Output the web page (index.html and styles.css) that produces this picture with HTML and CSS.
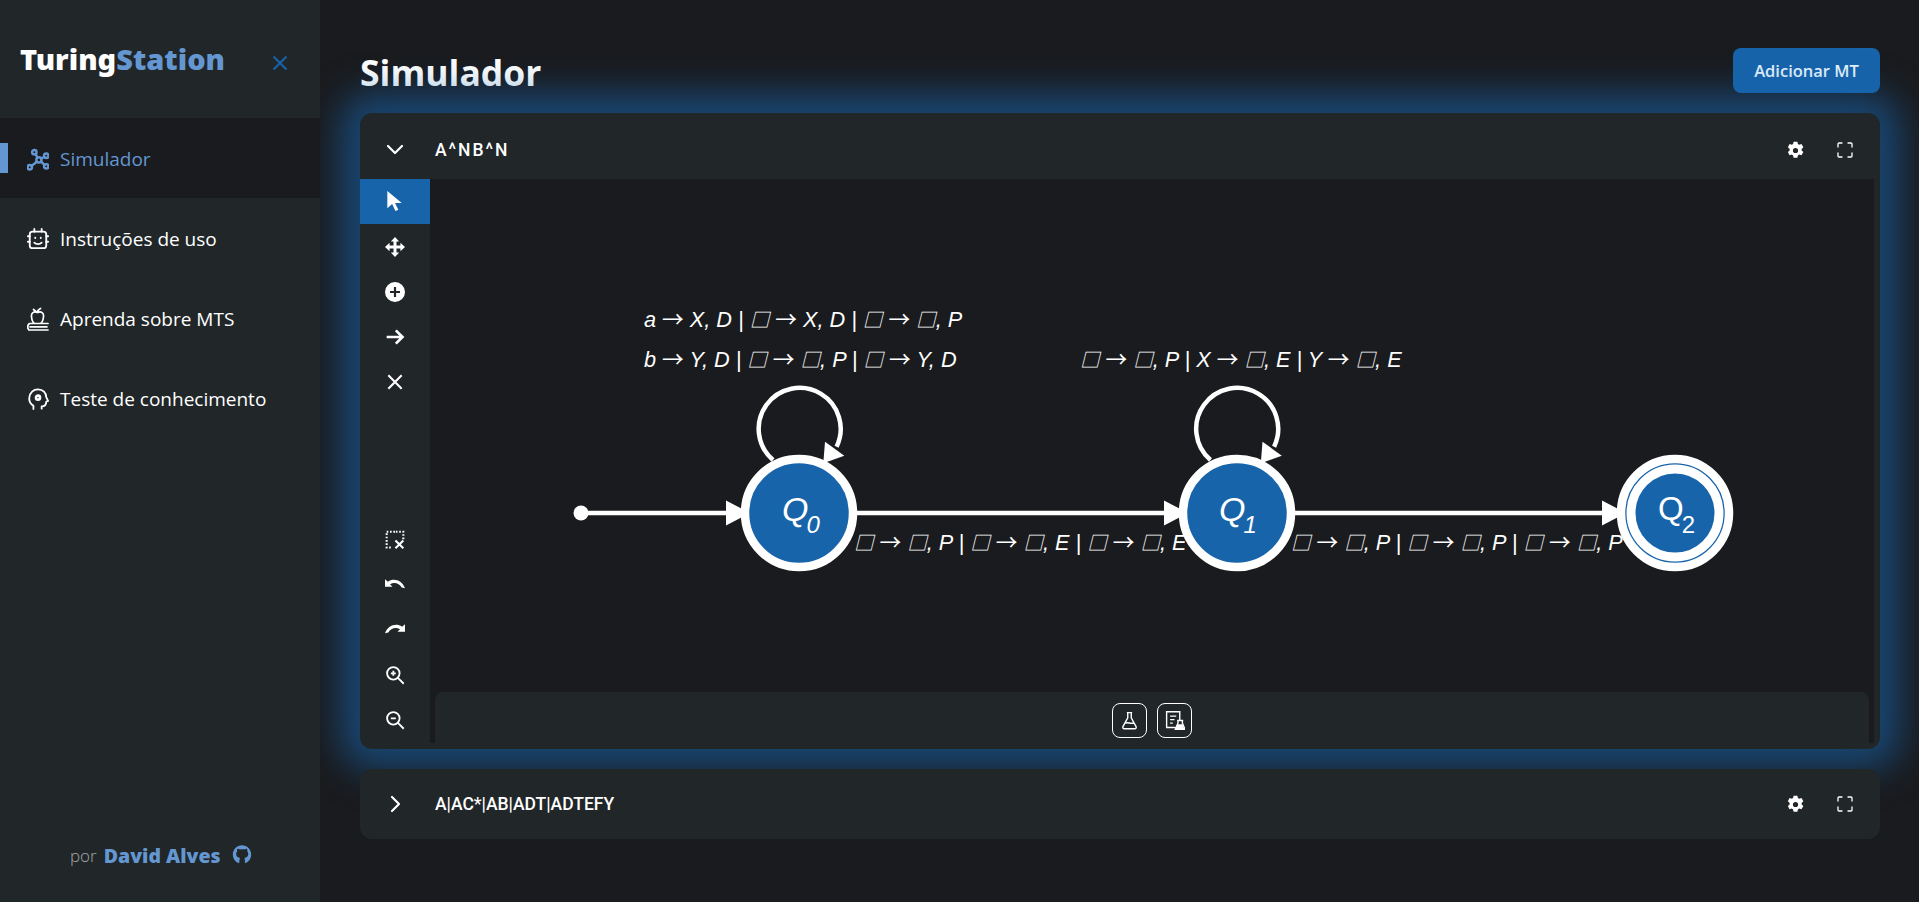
FILE: index.html
```html
<!DOCTYPE html>
<html lang="pt-BR">
<head>
  <meta charset="UTF-8">
  <meta name="viewport" content="width=device-width, initial-scale=1.0">
  <title>TuringStation</title>
  <link rel="stylesheet" href="styles.css">
</head>
<body>
  <aside class="sidebar">
    <div class="brand">
      <span class="logo">Turing<span class="logo-accent">Station</span></span>
      <svg class="brand-close" viewBox="0 0 16 16"><path d="M1.5 1.5l13 13M14.5 1.5l-13 13"/></svg>
    </div>

    <nav class="menu">
      <a class="menu-item active" href="#">
        <svg class="menu-icon chunky" viewBox="0 0 24 24"><circle cx="8" cy="4.500" r="2.400"/><circle cx="21" cy="8.500" r="2.400"/><circle cx="3" cy="21" r="2.400"/><circle cx="21" cy="20" r="2.400"/><circle cx="13" cy="13" r="2.800"/><path d="M9.500 7l2 3.500M18.800 9.800l-3.500 1.800M5 19.500l5.800-4.500M19 18.500l-3.800-3.800"/></svg>
        Simulador
      </a>
      <a class="menu-item" href="#">
        <svg class="menu-icon" viewBox="0 0 24 24"><rect x="3" y="4" width="18" height="18" rx="3"/><path d="M8 1v3M16 1v3M1 9h2M1 15h2M21 9h2M21 15h2M8 16c2 2.200 6 2.200 8 0M9 10.500v.5M15 10.500v.5"/></svg>
        Instruções de uso
      </a>
      <a class="menu-item" href="#">
        <svg class="menu-icon light" viewBox="0 0 22 24"><path d="M10 5.500c-3-1.500-6 .5-5.500 4 .2 3 1.500 6 3 7h6c1.500-1 2.800-4 3-7 .5-3.500-2.500-5.500-5.500-4zM10.500 5.500c0-1.500 1-3 3-4M6.500 2.500l3 2.500M2 23c-2-2-1.500-5 .5-6.500H21M2 23h19M3 19.800h17"/></svg>
        Aprenda sobre MTS
      </a>
      <a class="menu-item" href="#">
        <svg class="menu-icon" viewBox="0 0 24 24"><path d="M7 23v-3.500c-3-2-5-5-4.500-9C3 5 7 1.500 12 1.500c5.500 0 9 4 9 8.500l2 4-2 1c0 3-1 5-5 5v2.500"/><circle class="gear-dot" cx="12" cy="10.500" r="2.200"/></svg>
        Teste de conhecimento
      </a>
    </nav>

    <div class="credit">
      <span>por</span>
      <b class="credit-name">David Alves</b>
      <svg class="credit-icon" viewBox="0 0 24 24"><path d="M8.500 22.500c-4.500-1.500-7.500-5.500-7.500-10.500C1 6 6 1 12 1s11 5 11 11c0 5-3 9-7.500 10.500v-4c0-1-.3-1.800-.8-2.300 3-.5 4.800-2 4.800-5.200 0-1.200-.4-2.200-1.200-3 .2-.9.2-2-.3-3-1.200 0-2.200.6-3 1.100-1.900-.5-3.600-.5-5.400 0C8.800 5.600 7.800 5 6.500 5c-.5 1-.5 2.100-.3 3C5.400 8.800 5 9.800 5 11c0 3.200 1.800 4.700 4.800 5.200-.5.500-.8 1.300-.8 2.300z"/></svg>
    </div>
  </aside>

  <main class="content">
    <div class="page-head">
      <h1 class="page-title">Simulador</h1>
      <button class="add-btn">Adicionar MT</button>
    </div>

    <section class="card open">
      <div class="card-head">
        <svg class="chevron" viewBox="0 0 20 20"><path d="M3 6l7 7 7-7"/></svg>
        <span class="card-title spaced">A^NB^N</span>
        <svg class="head-icon" viewBox="0 0 512 512"><use href="#gear"/></svg>
        <svg class="head-icon frame" viewBox="0 0 16 16"><path d="M1 5V2a1 1 0 0 1 1-1h3M11 1h3a1 1 0 0 1 1 1v3M15 11v3a1 1 0 0 1-1 1h-3M5 15H2a1 1 0 0 1-1-1v-3"/></svg>
      </div>

      <div class="card-body">
        <div class="toolbar">
          <div class="tool-group">
            <button class="tool active"><svg class="cursor" viewBox="0 0 20 24"><path d="M2 1v18l5-4.500 3.500 7.500 3-1.500-3.500-7h7z"/></svg></button>
            <button class="tool"><svg viewBox="0 0 24 24"><path d="M12 0l5 5.500h-3.200v4.700h4.700V7l5.500 5-5.500 5v-3.200h-4.700v4.700H17L12 24l-5-5.500h3.200v-4.700H5.500V17L0 12l5.500-5v3.200h4.700V5.500H7z"/></svg></button>
            <button class="tool"><svg viewBox="1 1 22 22"><path fill-rule="evenodd" d="M12 1a11 11 0 1 0 0 22 11 11 0 0 0 0-22zM10.800 6.500h2.400v4.300h4.300v2.400h-4.300v4.300h-2.400v-4.300H6.500v-2.400h4.300z"/></svg></button>
            <button class="tool"><svg class="line-icon bold" viewBox="0 0 24 24"><path d="M2 12h19M13 4l8 8-8 8"/></svg></button>
            <button class="tool"><svg class="line-icon" viewBox="0 0 24 24"><path d="M4 4l16 16M20 4L4 20"/></svg></button>
          </div>
          <div class="tool-group">
            <button class="tool"><svg class="line-icon" viewBox="0 0 24 24"><path class="dots" d="M12 2H2v19h7M22 11V2H12"/><path d="M12.500 12.500l9.500 9.500M22 12.500L12.500 22"/></svg></button>
            <button class="tool"><svg viewBox="0 0 24 24"><path d="M0 5v9h9L6 11c5-3 11-1.500 14 4l4 1C21 7 11 2.500 3.500 8z"/></svg></button>
            <button class="tool"><svg viewBox="0 0 24 24"><path d="M24 5v9h-9l3-3c-5-3-11-1.500-14 4l-4 1C3 7 13 2.500 20.500 8z"/></svg></button>
            <button class="tool"><svg class="line-icon thin" viewBox="0 0 24 24"><circle cx="10" cy="10" r="7.500"/><path d="M15.500 15.500l7 7M10 7v6M7 10h6"/></svg></button>
            <button class="tool"><svg class="line-icon thin" viewBox="0 0 24 24"><circle cx="10" cy="10" r="7.500"/><path d="M15.500 15.500l7 7M7 10h6"/></svg></button>
          </div>
        </div>

        <div class="canvas">
          <svg class="diagram" viewBox="0 0 1444 564">
            <defs>
              <path id="head" d="M0 -12.500L24 0 0 12.500z"/>
              <g id="loop">
                <path class="loop-line" d="M343 281A41 41 0 1 1 406.600 267.700"/>
                <path class="loop-head" d="M395 262.700L414.300 276.700 393.300 284.300z"/>
              </g>
            </defs>
            <g class="edges">
              <circle class="start-dot" cx="151" cy="334" r="7.500"/>
              <line x1="151" y1="334" x2="300" y2="334"/>
              <line x1="420" y1="334" x2="740" y2="334"/>
              <line x1="857" y1="334" x2="1190" y2="334"/>
            </g>
            <use href="#loop"/>
            <use href="#loop" x="437.500"/>
            <g class="heads">
              <use href="#head" transform="translate(296 334)"/>
              <use href="#head" transform="translate(734 334)"/>
              <use href="#head" transform="translate(1172 334)"/>
            </g>
            <g class="labels">
              <text x="214" y="148">a <tspan class="sym">→</tspan> X, D | <tspan class="sq">□</tspan> <tspan class="sym">→</tspan> X, D | <tspan class="sq">□</tspan> <tspan class="sym">→</tspan> <tspan class="sq">□</tspan>, P</text>
              <text x="214" y="188">b <tspan class="sym">→</tspan> Y, D | <tspan class="sq">□</tspan> <tspan class="sym">→</tspan> <tspan class="sq">□</tspan>, P | <tspan class="sq">□</tspan> <tspan class="sym">→</tspan> Y, D</text>
              <text x="650" y="188"><tspan class="sq">□</tspan> <tspan class="sym">→</tspan> <tspan class="sq">□</tspan>, P | X <tspan class="sym">→</tspan> <tspan class="sq">□</tspan>, E | Y <tspan class="sym">→</tspan> <tspan class="sq">□</tspan>, E</text>
              <text x="424" y="371"><tspan class="sq">□</tspan> <tspan class="sym">→</tspan> <tspan class="sq">□</tspan>, P | <tspan class="sq">□</tspan> <tspan class="sym">→</tspan> <tspan class="sq">□</tspan>, E | <tspan class="sq">□</tspan> <tspan class="sym">→</tspan> <tspan class="sq">□</tspan>, E</text>
              <text x="861" y="371"><tspan class="sq">□</tspan> <tspan class="sym">→</tspan> <tspan class="sq">□</tspan>, P | <tspan class="sq">□</tspan> <tspan class="sym">→</tspan> <tspan class="sq">□</tspan>, P | <tspan class="sq">□</tspan> <tspan class="sym">→</tspan> <tspan class="sq">□</tspan>, P</text>
            </g>
            <g class="states">
              <circle cx="369" cy="334" r="54"/>
              <circle cx="807" cy="334" r="54"/>
              <circle cx="1245" cy="334" r="54"/>
              <circle class="ring" cx="1245" cy="334" r="44"/>
            </g>
            <g class="state-names">
              <text x="352" y="342">Q<tspan class="sub" dx="-2" dy="12">0</tspan></text>
              <text x="789" y="342">Q<tspan class="sub" dx="-2" dy="12">1</tspan></text>
              <text class="final" x="1228" y="341">Q<tspan class="sub" dx="-2" dy="13">2</tspan></text>
            </g>
          </svg>
          <div class="test-bar">
            <button class="test-btn"><svg viewBox="0 0 24 24"><path d="M9 3h6M10 3v6L4.500 19c-.6 1.500.2 2.500 1.500 2.500h12c1.300 0 2.100-1 1.500-2.500L14 9V3M7 15c3-1.500 6 1 10 0"/></svg></button>
            <button class="test-btn"><svg viewBox="0 0 24 24"><path d="M13 20H3V2h15v9M7 7h7M7 11h5M7 15h3M15 12h7M16 12v3l-3 7h11l-3-7v-3"/><path class="solid" d="M15.500 17h5l2 5h-9z"/></svg></button>
          </div>
        </div>
      </div>
    </section>

    <section class="card">
      <div class="card-head">
        <svg class="chevron" viewBox="0 0 20 20"><path d="M6 3l7 7-7 7"/></svg>
        <span class="card-title">A|AC*|AB|ADT|ADTEFY</span>
        <svg class="head-icon" viewBox="0 0 512 512"><use href="#gear"/></svg>
        <svg class="head-icon frame" viewBox="0 0 16 16"><path d="M1 5V2a1 1 0 0 1 1-1h3M11 1h3a1 1 0 0 1 1 1v3M15 11v3a1 1 0 0 1-1 1h-3M5 15H2a1 1 0 0 1-1-1v-3"/></svg>
      </div>
    </section>
  </main>

  <svg class="sprites" width="0" height="0">
    <defs>
      <path id="gear" fill-rule="evenodd" d="M205 20h102l14 62 36 21 60-20 51 88-47 43v42l47 43-51 88-60-20-36 21-14 62H205l-14-62-36-21-60 20-44-88 47-43v-42l-47-43 44-88 60 20 36-21zM256 186a70 70 0 1 0 0 140 70 70 0 0 0 0-140z"/>
    </defs>
  </svg>
</body>
</html>
```

FILE: styles.css
```css
* {
  box-sizing: border-box;
}
body {
  margin: 0;
  height: 902px;
  overflow: hidden;
  display: flex;
  background-color: #1a1b1e;
  color: #fff;
  font-family: "Open Sans", "Noto Sans", sans-serif;
}
button {
  font-family: inherit;
  border: none;
  cursor: pointer;
}
.sprites {
  position: absolute;
}

/* sidebar */
.sidebar {
  width: 320px;
  flex: none;
  display: flex;
  flex-direction: column;
  background-color: #212629;
  position: relative;
  z-index: 2;
}
.brand {
  height: 118px;
  display: flex;
  align-items: center;
  justify-content: space-between;
  padding: 0 32px 0 20px;
}
.logo {
  font-family: "Noto Sans", sans-serif;
  font-weight: 900;
  font-size: 29px;
  position: relative;
  top: -1px;
}
.logo-accent {
  color: #6497d1;
}
.brand-close {
  width: 16px;
  height: 16px;
  margin-top: 8px;
  fill: none;
  stroke: #1864ab;
  stroke-width: 2;
}
.menu-item {
  height: 80px;
  display: flex;
  align-items: center;
  gap: 11px;
  padding: 1px 0 0 27px;
  color: #fff;
  font-size: 19px;
  text-decoration: none;
  position: relative;
}
.menu-item.active {
  background-color: #1a1b1e;
  color: #6497d1;
}
.menu-item.active::before {
  content: "";
  position: absolute;
  left: 0;
  top: 25px;
  width: 8px;
  height: 30px;
  background-color: #6497d1;
}
.menu-icon {
  width: 22px;
  height: 24px;
  fill: none;
  stroke: currentColor;
  stroke-width: 2;
  stroke-linecap: round;
  stroke-linejoin: round;
}
.menu-icon.light {
  stroke-width: 1.700;
}
.menu-icon.chunky {
  stroke-width: 2.700;
}
.gear-dot {
  stroke-width: 2.800;
}
.credit {
  margin-top: auto;
  height: 58px;
  padding-left: 70px;
  display: flex;
  align-items: flex-start;
  gap: 7px;
  color: #a6a7ab;
  font-size: 17px;
  font-weight: 300;
}
.credit-name {
  color: #6497d1;
  font-family: "Noto Sans", sans-serif;
  font-weight: 900;
  font-size: 19.500px;
  line-height: 24px;
}
.credit-icon {
  width: 20px;
  height: 21px;
  margin-left: 4px;
  fill: #6497d1;
}

/* main */
.content {
  flex: 1;
  min-width: 0;
  padding: 48px 39px 0 40px;
}
.page-head {
  height: 45px;
  margin-bottom: 20px;
  display: flex;
  align-items: center;
  justify-content: space-between;
}
.page-title {
  margin: 0;
  font-size: 35.500px;
  font-weight: 700;
  line-height: 45px;
  position: relative;
  top: 2px;
}
.add-btn {
  width: 147px;
  height: 45px;
  border-radius: 8px;
  background-color: #1864ab;
  color: #e7f5ff;
  font-size: 16.500px;
  font-weight: 600;
}
.card {
  background-color: #212629;
  border-radius: 12px;
  margin-bottom: 20px;
  position: relative;
}
.card.open {
  height: 636px;
  box-shadow: 0 0 36px 20px rgba(24, 100, 171, 0.6);
}
.card-head {
  height: 70px;
  display: flex;
  align-items: center;
  padding-left: 26px;
}
.card.open .card-head {
  height: 66px;
  padding-left: 25px;
  padding-top: 8px;
}
.chevron {
  width: 20px;
  height: 20px;
  fill: none;
  stroke: #fff;
  stroke-width: 2.200;
  stroke-linecap: round;
  stroke-linejoin: round;
}
.card-title {
  margin-left: 30px;
  flex: 1;
  font-family: Roboto, sans-serif;
  font-size: 17.500px;
  font-weight: 500;
}
.card-title.spaced {
  letter-spacing: 2px;
}
.card .card-head:only-child .card-title {
  margin-left: 29px;
}
.head-icon {
  width: 19px;
  height: 19px;
  margin-right: 32px;
  fill: #fff;
}
.head-icon.frame {
  width: 16px;
  height: 16px;
  margin-right: 27px;
  fill: none;
  stroke: #fff;
  stroke-width: 1.300;
  stroke-linecap: round;
}
.card-body {
  display: flex;
  height: 570px;
}

/* tools */
.toolbar {
  width: 70px;
  flex: none;
  display: flex;
  flex-direction: column;
  justify-content: space-between;
  padding-bottom: 7px;
}
.tool {
  display: flex;
  width: 70px;
  height: 45px;
  align-items: center;
  justify-content: center;
  background: none;
  padding: 0;
}
.tool-group {
  display: flex;
  flex-direction: column;
}
.tool.active {
  background-color: #1864ab;
}
.tool svg {
  width: 20px;
  height: 20px;
  fill: #fff;
}
.tool .cursor {
  width: 22px;
  height: 23px;
}
.tool .line-icon {
  fill: none;
  stroke: #fff;
  stroke-width: 2.500;
}
.tool .line-icon.bold {
  stroke-width: 3.200;
}
.tool .line-icon.thin {
  stroke-width: 2.200;
}
.dots {
  stroke-dasharray: 2 2;
}

/* canvas */
.canvas {
  width: 1444px;
  height: 564px;
  background-color: #1a1b1e;
  position: relative;
}
.diagram {
  display: block;
  width: 1444px;
  height: 564px;
}
.edges line,
.loop-line {
  stroke: #fff;
  stroke-width: 4.500;
  fill: none;
}
.start-dot,
.heads,
.loop-head {
  fill: #fff;
}
.states circle {
  fill: #1864ab;
  stroke: #fff;
  stroke-width: 8.500;
}
.states .ring {
  stroke-width: 9;
}
.state-names text {
  font-family: "Liberation Sans", sans-serif;
  font-style: italic;
  font-size: 34px;
  fill: #fff;
}
.state-names .final {
  font-style: normal;
  font-size: 33px;
}
.state-names .sub {
  font-size: 24px;
}
.labels text {
  font-family: "Liberation Sans", sans-serif;
  font-style: italic;
  font-size: 21.700px;
  fill: #fff;
}
.labels .sq {
  font-family: "Noto Sans CJK JP", sans-serif;
  font-size: 19.500px;
}
.labels .sym {
  font-family: "Noto Sans CJK JP", sans-serif;
  font-style: normal;
}
.test-bar {
  position: absolute;
  left: 5px;
  right: 5px;
  bottom: -6px;
  height: 57px;
  border-radius: 8px 8px 0 0;
  background-color: #212629;
  display: flex;
  align-items: center;
  justify-content: center;
  gap: 10px;
}
.test-btn {
  width: 35px;
  height: 35px;
  padding: 0;
  border: 1px solid #fff;
  border-radius: 8px;
  background: none;
  display: flex;
  align-items: center;
  justify-content: center;
}
.test-btn svg {
  width: 21px;
  height: 21px;
  fill: none;
  stroke: #fff;
  stroke-width: 1.600;
}
.test-btn .solid {
  fill: #fff;
}
```
